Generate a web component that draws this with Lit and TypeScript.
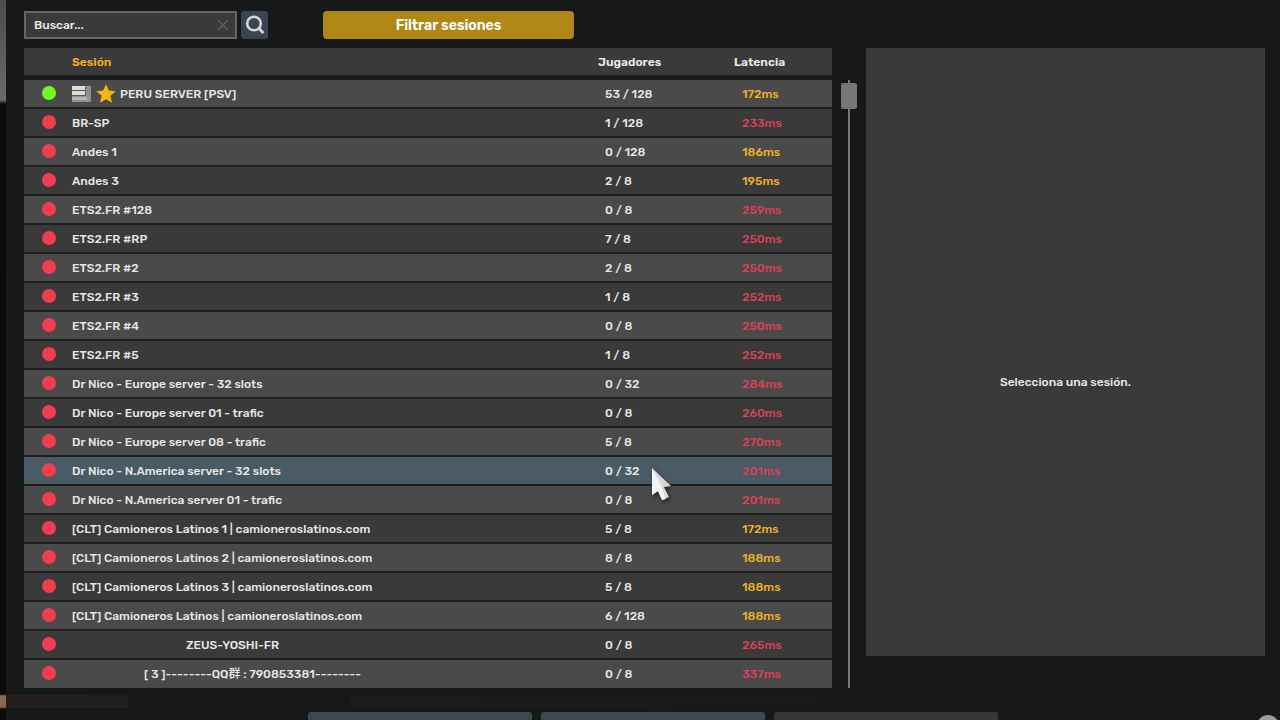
import { LitElement, html, css, nothing } from "lit";
import { customElement, property } from "lit/decorators.js";
import { classMap } from "lit/directives/class-map.js";
import { styleMap } from "lit/directives/style-map.js";

interface Session {
  name: string;
  players: string;
  ping: number;
  online?: boolean;
  featured?: boolean;
  hovered?: boolean;
  indent?: number;
}

const SESSIONS: Session[] = [
  { name: "PERU SERVER [PSV]", players: "53 / 128", ping: 172, online: true, featured: true },
  { name: "BR-SP", players: "1 / 128", ping: 233 },
  { name: "Andes 1", players: "0 / 128", ping: 186 },
  { name: "Andes 3", players: "2 / 8", ping: 195 },
  { name: "ETS2.FR #128", players: "0 / 8", ping: 259 },
  { name: "ETS2.FR #RP", players: "7 / 8", ping: 250 },
  { name: "ETS2.FR #2", players: "2 / 8", ping: 250 },
  { name: "ETS2.FR #3", players: "1 / 8", ping: 252 },
  { name: "ETS2.FR #4", players: "0 / 8", ping: 250 },
  { name: "ETS2.FR #5", players: "1 / 8", ping: 252 },
  { name: "Dr Nico - Europe server - 32 slots", players: "0 / 32", ping: 284 },
  { name: "Dr Nico - Europe server 01 - trafic", players: "0 / 8", ping: 260 },
  { name: "Dr Nico - Europe server 08 - trafic", players: "5 / 8", ping: 270 },
  { name: "Dr Nico - N.America server - 32 slots", players: "0 / 32", ping: 201, hovered: true },
  { name: "Dr Nico - N.America server 01 - trafic", players: "0 / 8", ping: 201 },
  { name: "[CLT] Camioneros Latinos 1 | camioneroslatinos.com", players: "5 / 8", ping: 172 },
  { name: "[CLT] Camioneros Latinos 2 | camioneroslatinos.com", players: "8 / 8", ping: 188 },
  { name: "[CLT] Camioneros Latinos 3 | camioneroslatinos.com", players: "5 / 8", ping: 188 },
  { name: "[CLT] Camioneros Latinos | camioneroslatinos.com", players: "6 / 128", ping: 188 },
  { name: "ZEUS-YOSHI-FR", players: "0 / 8", ping: 265, indent: 114 },
  { name: "[ 3 ]--------QQ群 : 790853381--------", players: "0 / 8", ping: 337, indent: 72 },
];

const HIGH_PING = 200;

@customElement("session-table")
export class SessionTable extends LitElement {
  @property({ attribute: false }) sessions: Session[] = [];

  static styles = css`
    :host {
      display: block;
    }
    .table {
      width: 100%;
      table-layout: fixed;
      border-collapse: separate;
      border-spacing: 0;
      background: #1b1b1b;
    }
    .col-status {
      width: 48px;
    }
    .col-players {
      width: 136px;
    }
    .col-ping {
      width: 98px;
    }
    th {
      height: 27px;
      padding: 0;
      border-bottom: 5px solid #1a1b1a;
      background: #3a3a3a;
      color: #e8e8e8;
      font-weight: 600;
      font-size: 12px;
      line-height: 16px;
      text-align: left;
    }
    .sorted {
      color: #e9ae1c;
    }
    td {
      height: 26px;
      padding: 1px 0 0;
      border-bottom: 2px solid #1e1e1e;
      background: #3a3a3a;
      line-height: 16px;
      white-space: nowrap;
    }
    tr:nth-child(odd) td {
      background: #4a4a4a;
    }
    tr:last-child td {
      border-bottom-width: 1px;
      border-bottom-color: #4a4a4a;
    }
    .hovered td,
    .hovered:nth-child(odd) td {
      background: #4b5b65;
    }
    .status {
      padding: 0 0 2px 18px;
      height: 25px;
    }
    .dot {
      display: block;
      width: 14px;
      height: 14px;
      border-radius: 50%;
      background: #f23c50;
    }
    .dot.online {
      background: #70fa1e;
    }
    .name {
      display: flex;
      align-items: center;
    }
    .icon-server {
      width: 19px;
      height: 17px;
      margin-right: 5px;
    }
    .icon-star {
      width: 20px;
      height: 20px;
      margin-right: 4px;
    }
    .players {
      padding-left: 7px;
    }
    .ping {
      padding-left: 8px;
      color: #eeb128;
    }
    .ping.high {
      color: #dc3f58;
    }
  `;

  private badges() {
    return html`
      <svg class="icon-server" viewBox="0 0 19 17" aria-hidden="true">
        <path fill="#919191" d="M0 0h19v16H0z" />
        <path fill="#dcdcdc" d="M0 0h13v4H0zM0 5h13v5H0z" />
        <path fill="#5a5a5a" d="M0 4h13v1H0zM0 10h14V1h-1v8H0z" />
        <path fill="#b4b4b4" d="M0 11h15v3H0z" />
      </svg>
      <svg class="icon-star" viewBox="0 0 20 20" aria-hidden="true">
        <path
          fill="#f7b516"
          d="M10 .2l2.8 6.4 6.9.6-5.3 4.6 1.6 7L10 15.2l-6 3.6 1.6-7L.3 7.2l6.9-.6z"
        />
      </svg>
    `;
  }

  render() {
    return html`
      <table class="table">
        <colgroup>
          <col class="col-status" />
          <col />
          <col class="col-players" />
          <col class="col-ping" />
        </colgroup>
        <thead>
          <tr>
            <th></th>
            <th class="sorted" scope="col">Sesión</th>
            <th scope="col">Jugadores</th>
            <th scope="col">Latencia</th>
          </tr>
        </thead>
        <tbody>
          ${this.sessions.map(
            (s) => html`
              <tr class=${classMap({ hovered: !!s.hovered })}>
                <td class="status">
                  <span class=${classMap({ dot: true, online: !!s.online })}></span>
                </td>
                <td>
                  <div class="name" style=${s.indent ? styleMap({ paddingLeft: `${s.indent}px` }) : nothing}>
                    ${s.featured ? this.badges() : nothing}<span>${s.name}</span>
                  </div>
                </td>
                <td class="players">${s.players}</td>
                <td class=${classMap({ ping: true, high: s.ping > HIGH_PING })}>${s.ping}ms</td>
              </tr>
            `
          )}
        </tbody>
      </table>
    `;
  }
}

@customElement("app-root")
export class AppRoot extends LitElement {
  static styles = css`
    :host {
      display: flex;
      height: 100vh;
      overflow: hidden;
      position: relative;
      background: #171918;
      color: #e6e6e6;
      font-family: Rubik, Roboto, "Noto Sans CJK SC", sans-serif;
      font-size: 12px;
      font-weight: 500;
      line-height: 16px;
    }
    * {
      box-sizing: border-box;
    }
    .edge {
      flex: none;
      width: 6px;
      background: linear-gradient(#4c4c4c, #6a6a6a 100px, #0c0c0c 104px, #0a0a0a 694px, #8a6a50 696px, #8a6a50 707px, #0a0a0a 709px);
    }
    .page {
      flex: 1;
      min-width: 0;
      padding: 11px 15px 0 18px;
    }
    .toolbar {
      display: flex;
      align-items: center;
      height: 28px;
      margin-bottom: 9px;
    }
    .search {
      display: flex;
      align-items: center;
      width: 213px;
      height: 28px;
      padding: 0 6px 0 8px;
      border: 2px solid #656765;
      background: #3a3a3a;
    }
    .search-input {
      flex: 1;
      min-width: 0;
      padding: 0;
      border: 0;
      outline: 0;
      background: none;
      color: inherit;
      font: inherit;
    }
    .search-input::placeholder {
      color: #e6e6e6;
      opacity: 1;
    }
    button {
      padding: 0;
      border: 0;
      font: inherit;
      color: inherit;
    }
    .clear {
      display: flex;
      background: none;
    }
    .go {
      display: grid;
      place-items: center;
      width: 27px;
      height: 28px;
      margin-left: 4px;
      border-radius: 3px;
      background: #3b4450;
    }
    .filter {
      width: 251px;
      height: 28px;
      margin-left: 55px;
      padding-top: 2px;
      border-radius: 4px;
      background: #b08614;
      color: #fff;
      font-size: 14px;
      font-weight: 600;
    }
    .content {
      display: flex;
      gap: 9px;
    }
    .list {
      flex: 1;
      min-width: 0;
    }
    .scroll {
      display: flex;
      flex-direction: column;
      align-items: center;
      width: 16px;
      margin-top: 32px;
      background: linear-gradient(#797979, #797979) center / 2px 100% no-repeat;
    }
    .thumb {
      width: 16px;
      height: 26px;
      margin-top: 3px;
      border-radius: 2px;
      background: #777;
    }
    .details {
      display: grid;
      place-items: center;
      flex: none;
      width: 399px;
      margin-bottom: 32px;
      padding-top: 60px;
      background: #3a3a3a;
    }
    .footer {
      display: flex;
      gap: 9px;
      margin-top: 24px;
      padding-left: 284px;
    }
    .action {
      width: 224px;
      height: 28px;
      border-radius: 3px;
      background: #3d484f;
    }
    .action.muted {
      background: #373737;
    }
    .round {
      width: 22px;
      height: 22px;
      margin: 3px -14px 0 auto;
      border-radius: 50%;
      background: #9b9b9b;
    }
    .glow {
      position: absolute;
      left: 6px;
      right: 400px;
      bottom: 12px;
      height: 13px;
      background: linear-gradient(90deg, #241f1c, #211e1c 122px, transparent 123px, transparent 344px, #1e1c19 345px, transparent);
    }
    .cursor {
      position: absolute;
      left: 650px;
      top: 466px;
      width: 24px;
      height: 38px;
      filter: drop-shadow(1px 2px 2px rgba(0, 0, 0, 0.55));
      pointer-events: none;
    }
  `;

  render() {
    return html`
      <div class="edge"></div>
      <div class="glow"></div>
      <main class="page">
        <form class="toolbar" @submit=${(e: Event) => e.preventDefault()}>
          <div class="search">
            <input class="search-input" type="text" placeholder="Buscar..." aria-label="Buscar" />
            <button class="clear" type="button" aria-label="Borrar">
              <svg width="12" height="12" viewBox="0 0 12 12" aria-hidden="true">
                <path d="M1 1l10 10M11 1L1 11" stroke="#626262" stroke-width="1.3" />
              </svg>
            </button>
          </div>
          <button class="go" type="submit" aria-label="Buscar sesiones">
            <svg width="20" height="20" viewBox="0 0 20 20" fill="none" aria-hidden="true">
              <circle cx="9" cy="8.5" r="6.8" stroke="#d3d7da" stroke-width="2.6" />
              <path d="M13.8 13.3l4.6 4.8" stroke="#d3d7da" stroke-width="2.8" />
            </svg>
          </button>
          <button class="filter" type="button">Filtrar sesiones</button>
        </form>
        <div class="content">
          <session-table class="list" .sessions=${SESSIONS}></session-table>
          <div class="scroll"><div class="thumb"></div></div>
          <aside class="details"><p>Selecciona una sesión.</p></aside>
        </div>
        <footer class="footer">
          <button class="action" type="button" aria-label="Acción 1"></button>
          <button class="action" type="button" aria-label="Acción 2"></button>
          <button class="action muted" type="button" aria-label="Acción 3"></button>
          <button class="round" type="button" aria-label="Ayuda"></button>
        </footer>
      </main>
      <svg class="cursor" viewBox="0 0 24 38" aria-hidden="true">
        <path fill="#d6d6d6" d="M2 2l19 18-7 1 5 10-7 3-4-9-6 4z" />
        <path fill="#f2f2f2" d="M2 2l9 17 5 14-4 1-4-9-6 4z" />
      </svg>
    `;
  }
}
